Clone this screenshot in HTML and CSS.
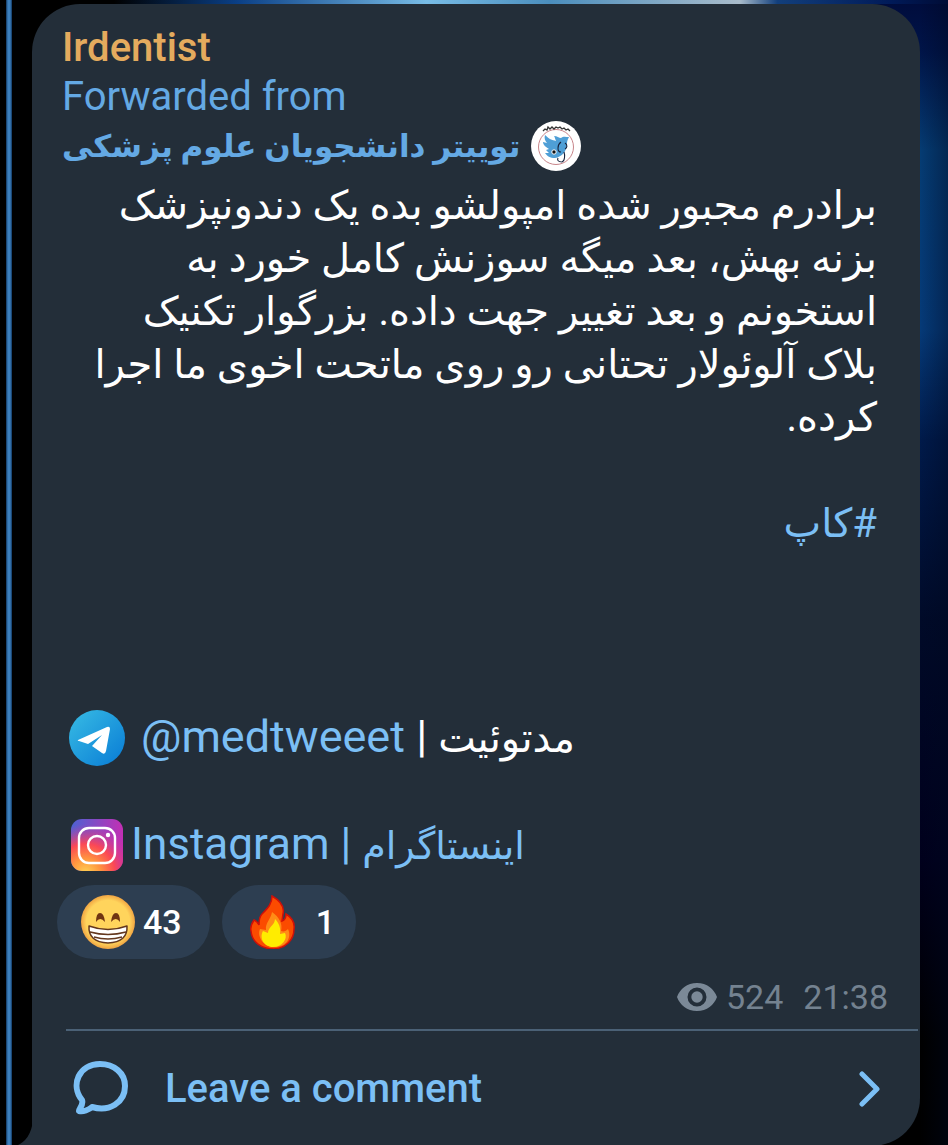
FILE: index.html
```html
<!DOCTYPE html>
<html lang="en">
<head>
    <meta charset="utf-8">
    <title>Irdentist</title>
    <link rel="stylesheet" href="styles.css">
</head>
<body>
    <div class="chat">
        <article class="message">
            <header>
                <h3 class="sender">Irdentist</h3>
                <div class="forwarded">Forwarded from</div>
                <a href="#" class="source">
                    <span lang="fa" dir="rtl">توییتر دانشجویان علوم پزشکی</span>
                    <svg class="avatar" viewBox="0 0 50 50" aria-hidden="true">
                        <circle cx="25" cy="25" r="25" fill="#fff"/>
                        <circle cx="25" cy="26" r="17.5" fill="none" stroke="#b9656b" stroke-width="0.8"/>
                        <path d="M12 10l2-2l2 1l1-3l2 2l2-2l2 2l2-2l2 1l2-1l2 2l2-1l2 2l2-1l2 2" fill="none" stroke="#333" stroke-width="1.3"/>
                        <path d="M14 14c4 4 7 5 11 6c-1-2-1-4-2-5c3 0 5 2 7 2c2-2 5-1 8-1c-1 2-2 4-2 6c0 8-5 14-12 15c-5 0-8-2-10-5h4l-3-3l3-1c-3-2-6-4-6-7l4 1c-2-2-3-5-2-8z" fill="#4f9fd6"/>
                        <circle cx="23" cy="31" r="2.2" fill="#111" stroke="#fff"/>
                        <path d="M30 21c-4 3-4 10 0 10M34 22c3 2 2 5 0 6M33 31c1 3 1 9-2 10c-4 0-5-2-4-4" fill="none" stroke="#17233d" stroke-width="1.1"/>
                    </svg>
                </a>
            </header>
            <p class="text" lang="fa" dir="rtl">برادرم مجبور شده امپولشو بده یک دندونپزشک<br>
                بزنه بهش، بعد میگه سوزنش کامل خورد به<br>
                استخونم و بعد تغییر جهت داده. بزرگوار تکنیک<br>
                بلاک آلوئولار تحتانی رو روی ماتحت اخوی ما اجرا<br>
                کرده.<br><br>
                <a href="#">#کاپ</a></p>
            <div class="social">
                <svg class="telegram" viewBox="0 0 56 56" aria-hidden="true">
                    <defs>
                        <linearGradient id="tg" x1="0" y1="0" x2="1" y2="1">
                            <stop offset="0" stop-color="#38bce4"/>
                            <stop offset="1" stop-color="#087bd5"/>
                        </linearGradient>
                    </defs>
                    <circle cx="28" cy="28" r="28" fill="url(#tg)"/>
                    <path d="M9 30L38 17q3-1 3 2l-4 22q-1 4-4 2l-10-7l10-11l-14 9l-9-3q-2 0-1-1z" fill="#fff"/>
                </svg>
                <span><a href="#">@medtweeet</a> | <span lang="fa" class="fa">مدتوئیت</span></span>
            </div>
            <div class="social instagram">
                <svg class="insta" viewBox="0 0 52 52" aria-hidden="true">
                    <defs>
                        <linearGradient id="ig" x1="0" y1="0" x2="1" y2="0">
                            <stop offset="0" stop-color="#4c62d3"/>
                            <stop offset="1" stop-color="#c32fb4"/>
                        </linearGradient>
                        <radialGradient id="glow" cx="0.28" cy="1.05" r="0.95">
                            <stop offset="0" stop-color="#ffd453"/>
                            <stop offset="0.3" stop-color="#ff963f"/>
                            <stop offset="0.6" stop-color="#fb4855"/>
                            <stop offset="1" stop-color="#d733a0" stop-opacity="0"/>
                        </radialGradient>
                    </defs>
                    <rect width="52" height="52" rx="11" fill="url(#ig)"/>
                    <rect width="52" height="52" rx="11" fill="url(#glow)"/>
                    <rect x="8" y="9" width="36" height="35" rx="10" fill="none" stroke="#fff" stroke-width="2.4"/>
                    <circle cx="26" cy="26" r="9" fill="none" stroke="#fff" stroke-width="2.4"/>
                    <circle cx="37" cy="16" r="2.2" fill="#fff"/>
                </svg>
                <a href="#">Instagram | <span lang="fa" class="fa">اینستاگرام</span></a>
            </div>
            <div class="reactions">
                <button type="button" class="reaction" aria-label="Grin 43">
                    <svg viewBox="0 0 54 54" aria-hidden="true">
                        <defs>
                            <radialGradient id="face">
                                <stop offset="0.8" stop-color="#ffd45c"/>
                                <stop offset="1" stop-color="#f0a443"/>
                            </radialGradient>
                        </defs>
                        <circle cx="27" cy="27" r="27" fill="url(#face)"/>
                        <path d="M15 27q0-9 4-9t5 9q-5-6-9 0zM30 27q1-9 5-9t4 9q-4-6-9 0z" fill="#703412"/>
                        <path d="M8 31q19 7 38 0q1 16-19 17q-20-1-19-17z" fill="#fff" stroke="#63371e" stroke-width="1.5" stroke-linejoin="round"/>
                        <path d="M9 37q18 5 36 0M13 42q14 4 28 0" fill="none" stroke="#63371e" stroke-width="1.5"/>
                    </svg>
                    <span>43</span>
                </button>
                <button type="button" class="reaction fire" aria-label="Fire 1">
                    <svg viewBox="0 0 54 54" aria-hidden="true">
                        <path d="M26 1c7 4 13 10 11 18l-1 7c3-1 4-4 4-7c5 3 9 8 8 15c0 11-8 19-20 20C15 54 6 47 5 36c-1-4 1-8 3-11q3 1 5 5c0-4 0-8 3-11C22 13 26 9 26 1z" fill="#fb4b00" stroke="#cf1008" stroke-width="1.5"/>
                        <path d="M26 17c-1 7-7 11-6 18l-6-1c-3 6 2 17 13 18c14 1 19-10 15-18c-2 2-4 3-7 2c2-7-2-14-9-19z" fill="#ff8c16"/>
                        <path d="M29 24c0 6-7 8-7 14l-5-2c-4 7 1 16 10 16s15-8 12-14l-5 1c1-6-1-11-5-15z" fill="#ffec00"/>
                    </svg>
                    <span>1</span>
                </button>
            </div>
            <div class="meta">
                <svg viewBox="0 0 40 28" aria-label="Views">
                    <path fill-rule="evenodd" d="M20 0C10 0 3 6 0 14c3 8 10 14 20 14s17-6 20-14C37 6 30 0 20 0zm0 4.500a9.500 9.500 0 1 1 0 19a9.500 9.500 0 0 1 0-19z" fill="#7b8997"/>
                    <circle cx="20" cy="14" r="5.700" fill="#7b8997"/>
                </svg>
                <span>524</span>
                <time>21:38</time>
            </div>
            <button type="button" class="comment">
                <svg class="balloon" viewBox="0 0 56 56" aria-hidden="true">
                    <path d="M9 39C-3 24 6 3 27 3c14 0 25 9 25 22c0 17-16 26-33 21c-3 3-9 5-13 4c-1-1 5-6 3-11z" fill="none" stroke="#7bbff5" stroke-width="6" stroke-linejoin="round"/>
                </svg>
                <span>Leave a comment</span>
                <svg class="arrow" viewBox="0 0 22 36" aria-hidden="true">
                    <path d="M3 3l15 15L3 33" fill="none" stroke="#7bbff5" stroke-width="5" stroke-linecap="round" stroke-linejoin="round"/>
                </svg>
            </button>
            <svg class="tail" viewBox="0 0 17 26" aria-hidden="true">
                <path d="M17 0Q15 20 0 26H17z" fill="#232e39"/>
            </svg>
        </article>
    </div>
</body>
</html>
```
FILE: styles.css
```css
body {
    margin: 0;
    background: #000;
    color: #fff;
    font-family: Roboto, "DejaVu Sans", sans-serif;
}

.chat {
    box-sizing: border-box;
    min-height: 100vh;
    padding: 4px 28px 0 32px;
    background:
        linear-gradient(90deg, transparent 6px, #10365f 6px, #3c7fbd 8px, #3c7fbd 10px, #10365f 12px, transparent 12px),
        linear-gradient(90deg, #000 12%, #0a3f86 25%, #78bce6 45%, #4b8ebd 58%, #a9bccb 78%, #123f7c 82%, #001a58 94%, #000c36) top / 100% 4px no-repeat,
        linear-gradient(90deg, transparent, #00082066) right / 28px 100% no-repeat,
        linear-gradient(#000c3c, #001448 50px, #053c73 150px, #053a78 330px, #001a4a 440px, #000a28 620px, #00001c 860px, #000 1040px) right / 120px 100% no-repeat;
}

.message {
    position: relative;
    box-sizing: border-box;
    padding: 19px 0 0 30px;
    background: #232e39;
    border-radius: 48px 48px 48px 0;
}

a {
    color: #7bbff5;
    text-decoration: none;
}

.sender {
    margin: 0;
    color: #e4ab5e;
    font-size: 40px;
    font-weight: 500;
    line-height: 50px;
}

.forwarded {
    color: #64a9e4;
    font-size: 40px;
    line-height: 48px;
}

.source {
    display: flex;
    align-items: center;
    gap: 11px;
    height: 50px;
    color: #64a9e4;
    font-size: 31px;
    font-weight: bold;
    white-space: nowrap;
}

.avatar {
    width: 50px;
    height: 50px;
}

.text {
    margin: 8px 43px 0 0;
    font-size: 40px;
    line-height: 53px;
    white-space: nowrap;
}

.social {
    display: flex;
    align-items: center;
    gap: 16px;
    height: 56px;
    margin: 160px 0 0 7px;
    font-size: 45px;
    line-height: 56px;
    white-space: nowrap;
}

.social svg {
    flex: none;
}

.fa {
    font-size: 40px;
}

.telegram {
    width: 56px;
    height: 56px;
}

.instagram {
    gap: 8px;
    margin: 51px 0 0 9px;
    font-size: 44px;
}

.instagram .fa {
    font-size: 38px;
}

.insta {
    width: 52px;
    height: 52px;
}

.reactions {
    display: flex;
    gap: 12px;
    margin: 12px 0 0 -5px;
}

.reaction {
    display: flex;
    align-items: center;
    gap: 8px;
    height: 74px;
    padding: 0 28px 0 24px;
    border: none;
    border-radius: 37px;
    background: #2d3e51;
    color: #fff;
    font: 500 34px Roboto, sans-serif;
    cursor: pointer;
}

.reaction svg {
    width: 54px;
    height: 54px;
}

.fire {
    gap: 16px;
    padding: 0 21px 0 24px;
}

.meta {
    display: flex;
    align-items: center;
    justify-content: flex-end;
    height: 40px;
    margin: 18px 32px 12px 0;
    color: #748290;
    font-size: 34px;
}

.meta svg {
    width: 40px;
    height: 28px;
    margin-right: 9px;
}

.meta time {
    margin-left: 20px;
}

.comment {
    display: flex;
    align-items: center;
    width: calc(100% - 6px);
    height: 117px;
    margin: 0 2px 0 4px;
    padding: 0 37px 0 7px;
    border: none;
    border-top: 2px solid #4b6176;
    background: none;
    color: #7bbff5;
    font: 500 40px Roboto, sans-serif;
    cursor: pointer;
}

.balloon {
    width: 56px;
    height: 56px;
    margin-right: 36px;
}

.arrow {
    width: 22px;
    height: 36px;
    margin-left: auto;
}

/* little corner at the bottom left of the bubble */
.tail {
    position: absolute;
    bottom: 0;
    left: -16px;
    width: 17px;
    height: 26px;
}
```
